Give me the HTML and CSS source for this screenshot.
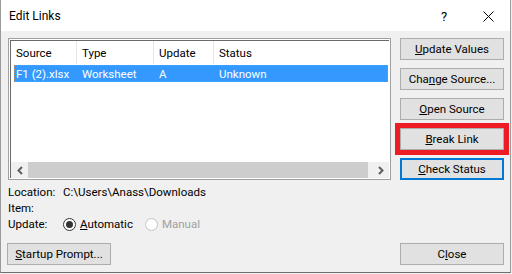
FILE: index.html
```html
<!DOCTYPE html>
<html>
<head>
<meta charset="utf-8">
<link rel="stylesheet" href="styles.css">
</head>
<body>
<div class="window">
  <div class="titlebar">
    <span class="title">Edit Links</span>
    <span class="help">?</span>
    <span class="close-x">
      <svg width="11" height="11" viewBox="0 0 11 11"><path d="M0.5 0.5 L10.5 10.5 M10.5 0.5 L0.5 10.5" stroke="#000" stroke-width="1" fill="none"/></svg>
    </span>
  </div>
  <div class="body">
    <div class="leftcol">
      <div class="listbox">
        <div class="listinner">
          <div class="header">
            <div class="hcell c1">Source</div>
            <div class="hcell c2">Type</div>
            <div class="hcell c3">Update</div>
            <div class="hcell c4">Status</div>
          </div>
          <div class="row">
            <div class="cell r1">F1 (2).xlsx</div>
            <div class="cell c2">Worksheet</div>
            <div class="cell c3">A</div>
            <div class="cell c4">Unknown</div>
          </div>
          <div class="spacer"></div>
          <div class="hscroll">
            <div class="sarrow">
              <svg width="8" height="9" viewBox="0 0 8 9"><path d="M6 1 L2.5 4.5 L6 8" stroke="#606060" stroke-width="2" fill="none"/></svg>
            </div>
            <div class="thumb"></div>
            <div class="sarrow">
              <svg width="8" height="9" viewBox="0 0 8 9"><path d="M2 1 L5.5 4.5 L2 8" stroke="#606060" stroke-width="2" fill="none"/></svg>
            </div>
          </div>
        </div>
      </div>
      <div class="details">
        <div class="drow"><span class="dlabel">Location:</span><span>C:\Users\Anass\Downloads</span></div>
        <div class="drow"><span class="dlabel">Item:</span><span></span></div>
        <div class="drow">
          <span class="dlabel">Update:</span>
          <span class="radio checked"></span><span class="rlabel"><u>A</u>utomatic</span>
          <span class="radio disabled"></span><span class="rlabel dis">Manual</span>
        </div>
      </div>
    </div>
    <div class="buttons">
      <button class="btn"><u>U</u>pdate Values</button>
      <button class="btn">Cha<u>n</u>ge Source...</button>
      <button class="btn"><u>O</u>pen Source</button>
      <button class="btn highlight"><u>B</u>reak Link</button>
      <button class="btn default"><u>C</u>heck Status</button>
    </div>
    <div class="bottom">
      <button class="btn startup"><u>S</u>tartup Prompt...</button>
      <button class="btn closebtn">C<u>l</u>ose</button>
    </div>
  </div>
</div>
</body>
</html>
```

FILE: styles.css
```css
* { box-sizing: border-box; }
html, body { margin: 0; padding: 0; }
body {
  width: 512px;
  height: 274px;
  overflow: hidden;
  background: #f0f0f0;
  font-family: Roboto, "Noto Sans", sans-serif;
  font-size: 11.5px;
  color: #000;
}
.window {
  width: 511px;
  height: 273px;
  border-left: 1px solid #9a9a9a;
  border-right: 1px solid #9a9a9a;
  border-bottom: 1px solid #6e6e6e;
  background: #f0f0f0;
  display: flex;
  flex-direction: column;
}
.titlebar {
  height: 31px;
  background: #fff;
  display: flex;
  align-items: center;
  padding-left: 8px;
}
.title { font-size: 12px; flex: 1; padding-top: 1px; }
.help { font-size: 13px; width: 42px; padding-top: 1px; }
.close-x { width: 27px; display: flex; align-items: center; padding-top: 1px; }
.close-x svg { display: block; }

.body {
  flex: 1;
  display: grid;
  grid-template-columns: 383px 104px;
  grid-template-rows: auto 1fr;
  column-gap: 9px;
  padding: 7px 0 0 7px;
}
.leftcol { grid-column: 1; grid-row: 1; }
.buttons {
  grid-column: 2;
  grid-row: 1;
  display: flex;
  flex-direction: column;
  gap: 8px;
}
.bottom {
  grid-column: 1 / 3;
  grid-row: 2;
  display: flex;
  justify-content: space-between;
  margin-top: 11px;
  margin-left: -1px;
  width: 497px;
}

.listbox {
  height: 142px;
  border: 1px solid #a0a0a0;
  background: #fff;
  padding: 1px;
}
.listinner {
  height: 100%;
  border-top: 1px solid #6a6a6a;
  border-left: 1px solid #6a6a6a;
  display: flex;
  flex-direction: column;
}
.header {
  height: 23px;
  display: flex;
  align-items: center;
}
.hcell {
  height: 100%;
  display: flex;
  align-items: center;
  padding-left: 5px;
  border-right: 1px solid #e5e5e5;
}
.c1 { width: 66px; }
.c2 { width: 77px; }
.c3 { width: 60px; }
.c4 { flex: 1; border-right: 0; }
.row {
  margin: 1px 1px 0 3px;
  height: 17px;
  background: #3399ff;
  color: #fff;
  display: flex;
  align-items: center;
  outline: 1px dotted #d08a3c;
  outline-offset: -1px;
}
.cell { padding-left: 5px; }
.r1 { width: 63px; padding-left: 2px; }
.spacer { flex: 1; }
.hscroll {
  height: 16px;
  display: flex;
  background: #f0f0f0;
}
.sarrow {
  width: 17px;
  display: flex;
  align-items: center;
  justify-content: center;
}
.sarrow svg { display: block; }
.thumb {
  flex: 1;
  background: #cdcdcd;
  margin-right: 4px;
}

.details { margin-top: 4px; }
.drow {
  height: 16px;
  display: flex;
  align-items: center;
}
.dlabel { width: 55px; }
.radio {
  width: 13px;
  height: 13px;
  border-radius: 50%;
  border: 1px solid #333;
  background: #fff;
  position: relative;
  margin-top: 1px;
}
.radio.checked::after {
  content: "";
  position: absolute;
  left: 2px;
  top: 2px;
  width: 7px;
  height: 7px;
  border-radius: 50%;
  background: #333;
}
.radio.disabled { border-color: #c4c4c4; }
.rlabel { margin-left: 4px; margin-right: 12px; }
.rlabel.dis { color: #a0a0a0; }

.btn {
  width: 104px;
  height: 22px;
  background: #e1e1e1;
  border: 1px solid #adadad;
  font-family: inherit;
  font-size: 11.5px;
  color: #000;
  padding: 0;
  margin: 0;
  display: flex;
  align-items: center;
  justify-content: center;
}
.btn.default { border: 2px solid #0078d7; }
.btn.highlight { outline: 5px solid #ed1c24; }
```
